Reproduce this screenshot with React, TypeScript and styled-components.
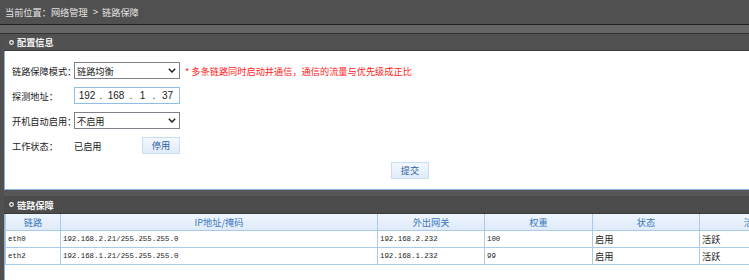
import React from "react";
import styled, { createGlobalStyle } from "styled-components";

const GlobalStyle = createGlobalStyle`
  html, body { margin: 0; padding: 0; background: #505050; }
  body {
    font-family: "Noto Sans CJK SC", "Liberation Sans", sans-serif;
    font-size: 9.2px;
    color: #222;
  }
`;

const Page = styled.div`
  width: 749px;
  height: 280px;
  overflow: hidden;
  background: #505050;
`;

const Breadcrumb = styled.div`
  height: 24px;
  line-height: 24px;
  padding-left: 5px;
  color: #e2e2e2;
  background: #505050;
  border-bottom: 1px solid #232323;
  white-space: nowrap;
  display: flex;
  align-items: center;
`;

const Sep = styled.span`
  margin: 0 4px 0 5px;
  font-family: "Liberation Sans", sans-serif;
`;

const Strip = styled.div`
  height: 8px;
  background: #666666;
  border-bottom: 1px solid #333333;
`;

const Main = styled.div`
  width: 815px;
  padding-left: 4px;
  box-sizing: border-box;
`;

const PanelHeader = styled.div<{ $h: number; $bg: string }>`
  height: ${(p) => p.$h}px;
  background: ${(p) => p.$bg};
  border-bottom: 1px solid #3a3a3a;
  display: flex;
  align-items: center;
  gap: 3px;
  padding-left: 5px;
  color: #f4f4f4;
  font-weight: 700;
  white-space: nowrap;
`;

const Ring = () => (
  <svg width="5" height="5" viewBox="0 0 5 5">
    <circle cx="2.5" cy="2.5" r="1.8" fill="none" stroke="#f0f0f0" strokeWidth="1.2" />
  </svg>
);

const PanelBody = styled.div`
  background: #fff;
  border-left: 1px solid #8eb0dc;
  border-bottom: 1px solid #8eb0dc;
  padding: 11px 0 10px 0;
  display: flex;
  flex-direction: column;
  gap: 8px;
`;

const Row = styled.div`
  display: grid;
  grid-template-columns: 62px auto;
  align-items: center;
  height: 17px;
  padding-left: 7px;
`;

const Label = styled.span`
  white-space: nowrap;
  color: #222;
`;

const Field = styled.div`
  display: flex;
  align-items: center;
`;

const SelectBox = styled.div`
  width: 106px;
  height: 17px;
  box-sizing: border-box;
  border: 1px solid #7d8189;
  display: flex;
  align-items: center;
  justify-content: space-between;
  padding: 0 3px 0 2px;
  background: #fff;
  color: #222;
`;

const Chevron = () => (
  <svg width="8" height="5" viewBox="0 0 8 5">
    <path d="M0.8 0.8 L4 4 L7.2 0.8" fill="none" stroke="#222" strokeWidth="1.5" />
  </svg>
);

const Hint = styled.span`
  color: #ff1a1a;
  margin-left: 5px;
  white-space: nowrap;
`;

const IpBox = styled.div`
  width: 106px;
  height: 17px;
  box-sizing: border-box;
  border: 1px solid #8fbde9;
  display: flex;
  align-items: center;
  font-family: "Liberation Sans", sans-serif;
  font-size: 10px;
  color: #222;
`;

const IpSeg = styled.span<{ $w: number }>`
  width: ${(p) => p.$w}px;
  text-align: center;
`;

const IpDot = styled.span`
  width: 4px;
  text-align: center;
`;

const Value = styled.span`
  width: 68px;
  white-space: nowrap;
`;

const Btn = styled.button`
  width: 38px;
  height: 17px;
  padding: 0;
  border: 1px solid #cadcf1;
  background: linear-gradient(#f3f8fe, #dfebf9);
  color: #2f5f9c;
  font-family: "Noto Sans CJK SC", sans-serif;
  font-size: 9.2px;
  line-height: 15px;
`;

const SubmitRow = styled.div`
  display: flex;
  justify-content: center;
  height: 17px;
`;

const Gap = styled.div`
  height: 6px;
  background: #575757;
`;

const TableBody = styled.div`
  background: #fff;
  border-left: 1px solid #8eb0dc;
  height: 80px;
`;

const Table = styled.table`
  width: 801px;
  table-layout: fixed;
  border-collapse: collapse;
`;

const Th = styled.th`
  height: 16px;
  padding: 0;
  font-weight: 400;
  color: #3b78ba;
  text-align: center;
  background: linear-gradient(#eef5fd, #deebf9);
  border: 1px solid #aacbea;
  border-top: none;
  white-space: nowrap;
  overflow: hidden;
`;

const Td = styled.td<{ $mono?: boolean }>`
  height: 16px;
  padding: 0 2px;
  border: 1px solid #aacbea;
  white-space: nowrap;
  overflow: hidden;
  color: #222;
  font-family: ${(p) =>
    p.$mono ? '"Liberation Mono", monospace' : '"Noto Sans CJK SC", sans-serif'};
  font-size: ${(p) => (p.$mono ? "7.4px" : "9.2px")};
`;

const cols = [55, 317, 107, 108, 107, 107];
const heads = ["链路", "IP地址/掩码", "外出网关", "权重", "状态", "活跃"];
const rows = [
  ["eth0", "192.168.2.21/255.255.255.0", "192.168.2.232", "100", "启用", "活跃"],
  ["eth2", "192.168.1.21/255.255.255.0", "192.168.1.232", "99", "启用", "活跃"],
];

export default function App() {
  return (
    <Page>
      <GlobalStyle />
      <Breadcrumb>
        当前位置：网络管理<Sep>&gt;</Sep>链路保障
      </Breadcrumb>
      <Strip />
      <Main>
        <PanelHeader $h={16} $bg="#515151">
          <Ring />
          配置信息
        </PanelHeader>
        <PanelBody>
          <Row>
            <Label>链路保障模式：</Label>
            <Field>
              <SelectBox>
                链路均衡
                <Chevron />
              </SelectBox>
              <Hint>* 多条链路同时启动并通信，通信的流量与优先级成正比</Hint>
            </Field>
          </Row>
          <Row>
            <Label>探测地址：</Label>
            <Field>
              <IpBox>
                <IpSeg $w={24}>192</IpSeg>
                <IpDot>.</IpDot>
                <IpSeg $w={26}>168</IpSeg>
                <IpDot>.</IpDot>
                <IpSeg $w={19}>1</IpSeg>
                <IpDot>.</IpDot>
                <IpSeg $w={23}>37</IpSeg>
              </IpBox>
            </Field>
          </Row>
          <Row>
            <Label>开机自动启用：</Label>
            <Field>
              <SelectBox>
                不启用
                <Chevron />
              </SelectBox>
            </Field>
          </Row>
          <Row>
            <Label>工作状态：</Label>
            <Field>
              <Value>已启用</Value>
              <Btn>停用</Btn>
            </Field>
          </Row>
          <SubmitRow>
            <Btn>提交</Btn>
          </SubmitRow>
        </PanelBody>
        <Gap />
        <PanelHeader $h={17} $bg="#4b4b4b">
          <Ring />
          链路保障
        </PanelHeader>
        <TableBody>
          <Table>
            <colgroup>
              {cols.map((w, i) => (
                <col key={i} style={{ width: w }} />
              ))}
            </colgroup>
            <thead>
              <tr>
                {heads.map((h) => (
                  <Th key={h}>{h}</Th>
                ))}
              </tr>
            </thead>
            <tbody>
              {rows.map((r) => (
                <tr key={r[0]}>
                  <Td $mono>{r[0]}</Td>
                  <Td $mono>{r[1]}</Td>
                  <Td $mono>{r[2]}</Td>
                  <Td $mono>{r[3]}</Td>
                  <Td>{r[4]}</Td>
                  <Td>{r[5]}</Td>
                </tr>
              ))}
            </tbody>
          </Table>
        </TableBody>
      </Main>
    </Page>
  );
}
